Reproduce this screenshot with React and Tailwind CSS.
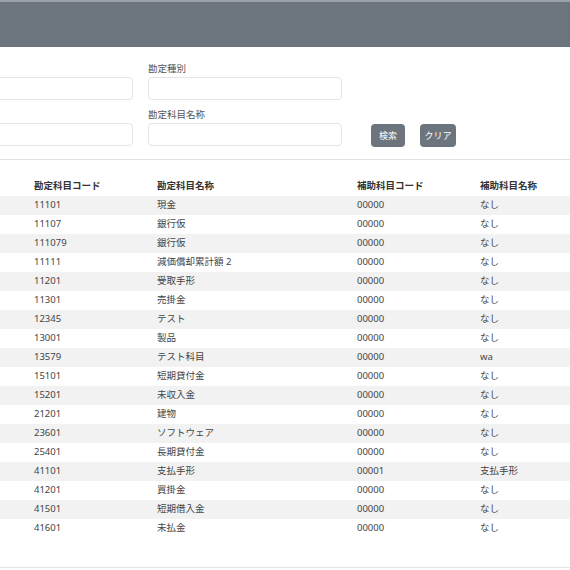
import React from "react";

const rows = [
  ["11101", "現金", "00000", "なし"],
  ["11107", "銀行仮", "00000", "なし"],
  ["111079", "銀行仮", "00000", "なし"],
  ["11111", "減価償却累計額 2", "00000", "なし"],
  ["11201", "受取手形", "00000", "なし"],
  ["11301", "売掛金", "00000", "なし"],
  ["12345", "テスト", "00000", "なし"],
  ["13001", "製品", "00000", "なし"],
  ["13579", "テスト科目", "00000", "wa"],
  ["15101", "短期貸付金", "00000", "なし"],
  ["15201", "未収入金", "00000", "なし"],
  ["21201", "建物", "00000", "なし"],
  ["23601", "ソフトウェア", "00000", "なし"],
  ["25401", "長期貸付金", "00000", "なし"],
  ["41101", "支払手形", "00001", "支払手形"],
  ["41201", "買掛金", "00000", "なし"],
  ["41501", "短期借入金", "00000", "なし"],
  ["41601", "未払金", "00000", "なし"],
];

const Field = ({ label }) => (
  <div>
    <div className="h-[22px] flex items-end pb-[1px] text-[9.5px] leading-[14px] text-[#555]">{label}</div>
    <div className="h-[23px] rounded-[4px] border border-[#e3e5e8] bg-white"></div>
  </div>
);

const App = () => {
  return (
    <div
      className="w-[570px] h-[570px] overflow-hidden bg-white text-[#444]"
      style={{ fontFamily: '"Noto Sans", "Noto Sans CJK JP", sans-serif' }}
    >
      <div className="h-[47px] bg-[#6c757d] border-t-2 border-[#9aa1a8]"></div>

      <div className="h-[113px] pt-[8px] border-b border-[#dfe2e5] flex">
        <div className="-ml-[60px] w-[193px] flex flex-col gap-[1px]">
          <Field label="" />
          <Field label="" />
        </div>
        <div className="ml-[15px] w-[194px] flex flex-col gap-[1px]">
          <Field label="勘定種別" />
          <Field label="勘定科目名称" />
        </div>
        <div className="ml-[29px] pt-[69px] flex gap-[15px]">
          <button className="h-[23px] w-[34px] rounded-[4px] bg-[#6c757d] text-white text-[9px]">検索</button>
          <button className="h-[23px] w-[36px] rounded-[4px] bg-[#6c757d] text-white text-[9px]">クリア</button>
        </div>
      </div>

      <div className="mt-[17px] h-[391px] border-b border-[#e3e5e8] text-[9.5px]">
        <div className="h-[19px] flex items-center pl-[34px] font-semibold text-[#333]">
          <div className="w-[123px]">勘定科目コード</div>
          <div className="w-[200px]">勘定科目名称</div>
          <div className="w-[123px]">補助科目コード</div>
          <div>補助科目名称</div>
        </div>
        {rows.map((r, i) => (
          <div
            key={i}
            className={`h-[19px] flex items-center pl-[34px] ${i % 2 === 0 ? "bg-[#f2f2f2]" : "bg-white"}`}
          >
            <div className="w-[123px]">{r[0]}</div>
            <div className="w-[200px]">{r[1]}</div>
            <div className="w-[123px]">{r[2]}</div>
            <div>{r[3]}</div>
          </div>
        ))}
      </div>
    </div>
  );
};

export default App;
